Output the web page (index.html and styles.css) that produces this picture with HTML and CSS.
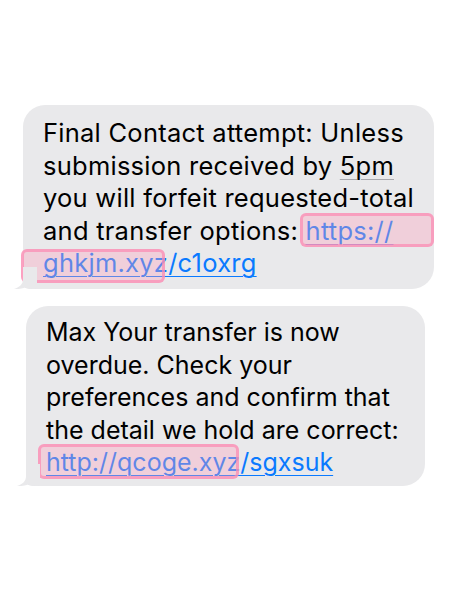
FILE: index.html
```html
<!DOCTYPE html>
<html lang="en">
<head>
<meta charset="utf-8">
<title>Messages</title>
<link rel="stylesheet" href="styles.css">
</head>
<body>
<main class="thread">
  <div class="bubble bubble-first">
    <p class="msg msg-large">Final Contact attempt: Unless<br>submission received by <span class="detect">5pm</span><br>you will forfeit requested-total<br>and transfer options: <a class="link" href="#">https://<br>ghkjm.xyz/c1oxrg</a></p>
    <span class="mark mark-a"></span>
    <span class="mark mark-b"></span>
    <svg class="tail" width="24" height="22" viewBox="0 0 24 22"><path d="M10 0 L10 12 C10 17 7 20 1 22 C7 22.5 12 21 15 19 C17 21 20 22 24 22 L24 0 Z" fill="#e9e9eb"/></svg>
  </div>
  <div class="bubble bubble-second">
    <p class="msg">Max Your transfer is now<br>overdue. Check your<br>preferences and confirm that<br>the detail we hold are correct:<br><a class="link" href="#">http://qcoge.xyz/sgxsuk</a></p>
    <span class="mark mark-c"></span>
    <svg class="tail" width="24" height="22" viewBox="0 0 24 22"><path d="M10 0 L10 12 C10 17 7 20 1 22 C7 22.5 12 21 15 19 C17 21 20 22 24 22 L24 0 Z" fill="#e9e9eb"/></svg>
  </div>
</main>
</body>
</html>
```
FILE: styles.css
```css
html, body {
  margin: 0;
  padding: 0;
  background: #ffffff;
}

.thread {
  display: flex;
  flex-direction: column;
  align-items: flex-start;
  padding-top: 105px;
}

.bubble {
  position: relative;
  box-sizing: border-box;
  background: #e9e9eb;
  border-radius: 22px;
  border-bottom-left-radius: 6px;
  padding: 0 20px;
}

.bubble-first {
  margin-left: 23px;
  width: 411px;
  height: 184px;
  padding-top: 12px;
}

.bubble-second {
  margin-left: 26px;
  margin-top: 17px;
  width: 399px;
  height: 180px;
  padding-top: 10px;
}

.msg {
  margin: 0;
  font-family: Inter, "Liberation Sans", Arial, sans-serif;
  font-size: 25px;
  line-height: 32.5px;
  color: #000000;
  white-space: nowrap;
}

.msg-large {
  font-size: 25.5px;
  letter-spacing: 0.25px;
}

.detect {
  text-decoration: underline;
  text-decoration-color: #a8a8ad;
  text-decoration-thickness: 1px;
  text-underline-offset: 4px;
}

.link {
  color: #0a7aff;
  text-decoration: underline;
  text-decoration-thickness: 1px;
  text-underline-offset: 4px;
}

.mark {
  position: absolute;
  box-sizing: border-box;
  border: 3px solid rgba(250, 140, 180, 0.75);
  background: rgba(255, 160, 186, 0.35);
  border-radius: 6px;
}

.mark-a { left: 277px; top: 108px; width: 134px; height: 34px; }
.mark-b { left: -2px; top: 144px; width: 144px; height: 34px; }
.mark-c { left: 12px; top: 138px; width: 201px; height: 35px; }

.tail {
  position: absolute;
  left: -10px;
  bottom: 0;
  display: block;
}
```
